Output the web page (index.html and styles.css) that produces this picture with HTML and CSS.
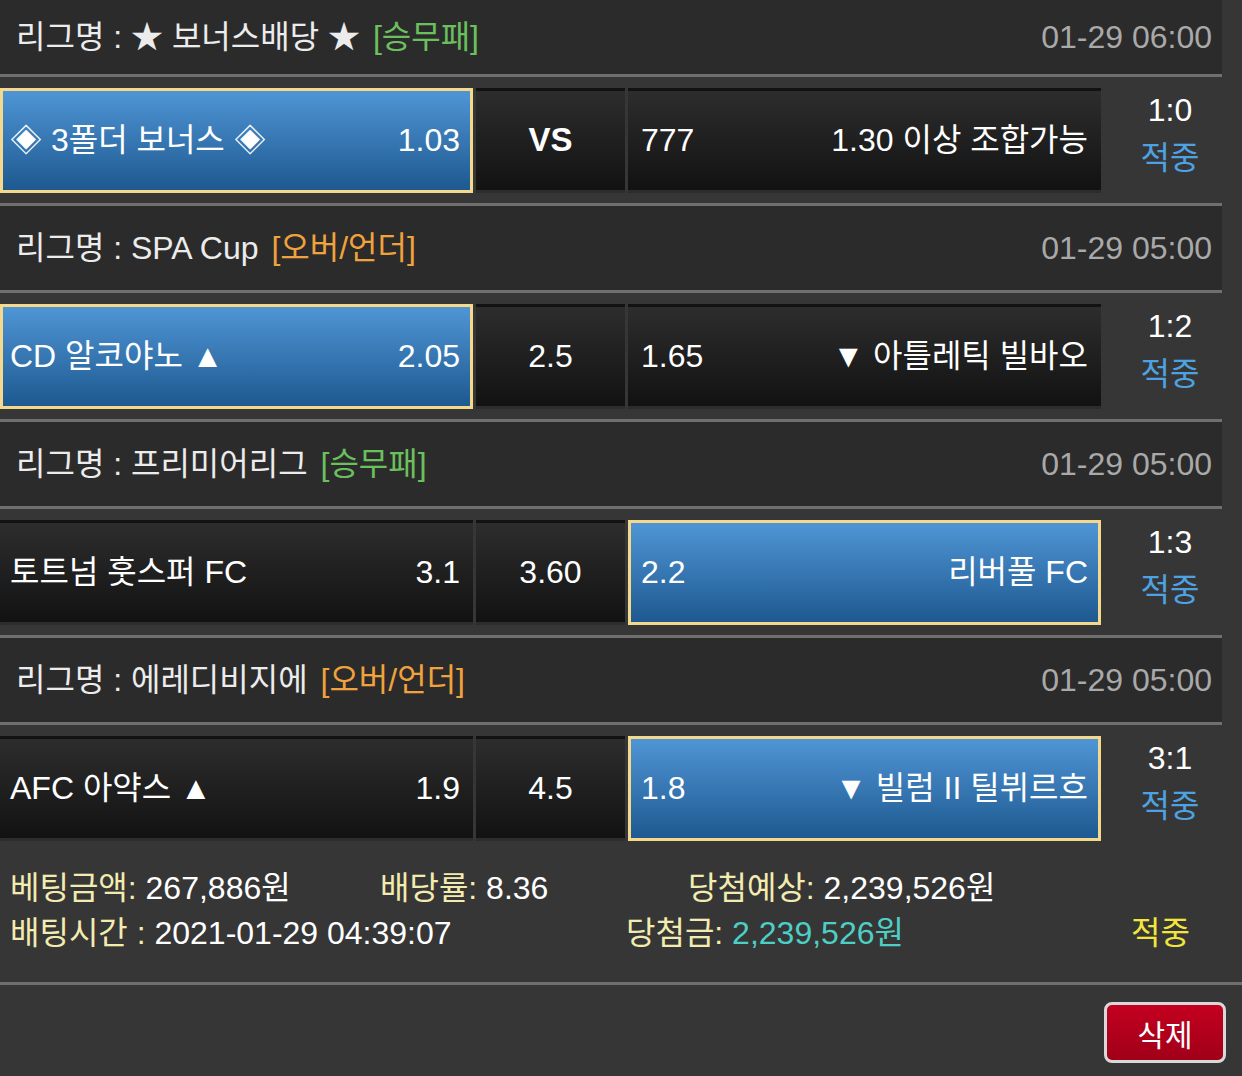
FILE: index.html
```html
<!DOCTYPE html>
<html lang="ko">
<head>
  <meta charset="UTF-8">
  <meta name="viewport" content="width=device-width, initial-scale=1.0">
  <title>베팅내역</title>
  <link rel="stylesheet" href="styles.css">
</head>
<body>

<div class="slip">
  <!-- 경기 1 -->
  <div class="league">
    <span class="league-name">리그명 : ★ 보너스배당 ★ <span class="tag green">[승무패]</span></span>
    <span class="time">01-29 06:00</span>
  </div>
  <div class="match">
    <div class="pick home on"><span>◈ 3폴더 보너스 ◈</span><span>1.03</span></div>
    <div class="pick mid"><b>VS</b></div>
    <div class="pick away"><span>777</span><span>1.30 이상 조합가능</span></div>
    <div class="result"><span>1:0</span><span class="hit">적중</span></div>
  </div>

  <!-- 경기 2 -->
  <div class="league">
    <span class="league-name">리그명 : SPA Cup <span class="tag orange">[오버/언더]</span></span>
    <span class="time">01-29 05:00</span>
  </div>
  <div class="match">
    <div class="pick home on"><span>CD 알코야노 ▲</span><span>2.05</span></div>
    <div class="pick mid">2.5</div>
    <div class="pick away"><span>1.65</span><span>▼ 아틀레틱 빌바오</span></div>
    <div class="result"><span>1:2</span><span class="hit">적중</span></div>
  </div>

  <!-- 경기 3 -->
  <div class="league">
    <span class="league-name">리그명 : 프리미어리그 <span class="tag green">[승무패]</span></span>
    <span class="time">01-29 05:00</span>
  </div>
  <div class="match">
    <div class="pick home"><span>토트넘 훗스퍼 FC</span><span>3.1</span></div>
    <div class="pick mid">3.60</div>
    <div class="pick away on"><span>2.2</span><span>리버풀 FC</span></div>
    <div class="result"><span>1:3</span><span class="hit">적중</span></div>
  </div>

  <!-- 경기 4 -->
  <div class="league">
    <span class="league-name">리그명 : 에레디비지에 <span class="tag orange">[오버/언더]</span></span>
    <span class="time">01-29 05:00</span>
  </div>
  <div class="match">
    <div class="pick home"><span>AFC 아약스 ▲</span><span>1.9</span></div>
    <div class="pick mid">4.5</div>
    <div class="pick away on"><span>1.8</span><span>▼ 빌럼 II 틸뷔르흐</span></div>
    <div class="result"><span>3:1</span><span class="hit">적중</span></div>
  </div>
</div>

<!-- 베팅 요약 -->
<div class="summary">
  <div class="sum-row first">
    <span><span class="label">베팅금액:</span> 267,886원</span>
    <span><span class="label">배당률:</span> 8.36</span>
    <span><span class="label">당첨예상:</span> 2,239,526원</span>
  </div>
  <div class="sum-row second">
    <span><span class="label">배팅시간 :</span> 2021-01-29 04:39:07</span>
    <span><span class="label">당첨금:</span> <span class="won">2,239,526원</span></span>
    <span class="status">적중</span>
  </div>
</div>

<div class="actions">
  <button class="btn-delete">삭제</button>
</div>

</body>
</html>
```

FILE: styles.css
```css
/* 베팅내역 카드 */
body {
  margin: 0;
  width: 1242px;
  background-color: #363636;
  color: #fff;
  font-family: "Liberation Sans", "Noto Sans CJK KR", sans-serif;
  font-size: 32px;
  line-height: 1.2;
}
.league {
  width: 1222px;
  height: 84px;
  box-sizing: border-box;
  display: flex;
  justify-content: space-between;
  align-items: center;
  padding: 0 10px 0 16px;
  background-color: #2b2b2b;
  border-bottom: 3px solid #6f6f6f;
  color: #ececec;
}
.league:first-child {
  height: 77px;
}
.match + .league {
  height: 90px;
  border-top: 3px solid #6f6f6f;
}
.tag {
  margin-left: 4px;
}
.tag.green {
  color: #6bc05e;
}
.tag.orange {
  color: #f0a23c;
}
.time {
  color: #a9a9a9;
}
.match {
  display: flex;
  align-items: center;
  gap: 3px;
  height: 126px;
}
.pick {
  height: 105px;
  box-sizing: border-box;
  display: flex;
  justify-content: space-between;
  align-items: center;
  padding: 0 10px;
  border: 3px solid transparent;
  background: linear-gradient(#2d2d2d, #121212);
}
.pick.home,
.pick.away {
  width: 473px;
}
.pick.home {
  padding-left: 7px;
}
.pick.mid {
  width: 149px;
  justify-content: center;
}
.pick.mid b {
  font-size: 33px;
}
.pick.on {
  border-color: #f4d98c;
  background: linear-gradient(#4f95d5, #1e5990);
}
.result {
  flex: 1;
  display: flex;
  flex-direction: column;
  align-items: center;
  padding: 0 6px 12px 0;
  gap: 9px;
}
.hit {
  color: #4ea2e2;
}
.summary {
  height: 134px;
  box-sizing: border-box;
  padding: 15px 0 0 10px;
  border-bottom: 3px solid #6f6f6f;
}
.sum-row {
  display: grid;
  height: 45px;
  align-items: center;
}
.sum-row.first {
  grid-template-columns: 370px 308px auto;
}
.sum-row.second {
  grid-template-columns: 616px 505px auto;
}
.label {
  color: #f3ecb0;
}
.won {
  color: #4dcfc6;
}
.status {
  color: #f2e63c;
}
.actions {
  display: flex;
  justify-content: flex-end;
  padding: 17px 16px 0 0;
}
.btn-delete {
  width: 122px;
  height: 61px;
  border: 3px solid #d9d9d9;
  border-radius: 8px;
  background: linear-gradient(#c3001f, #a10019);
  color: #fff;
  font-family: inherit;
  font-size: 30px;
  cursor: pointer;
}
```
